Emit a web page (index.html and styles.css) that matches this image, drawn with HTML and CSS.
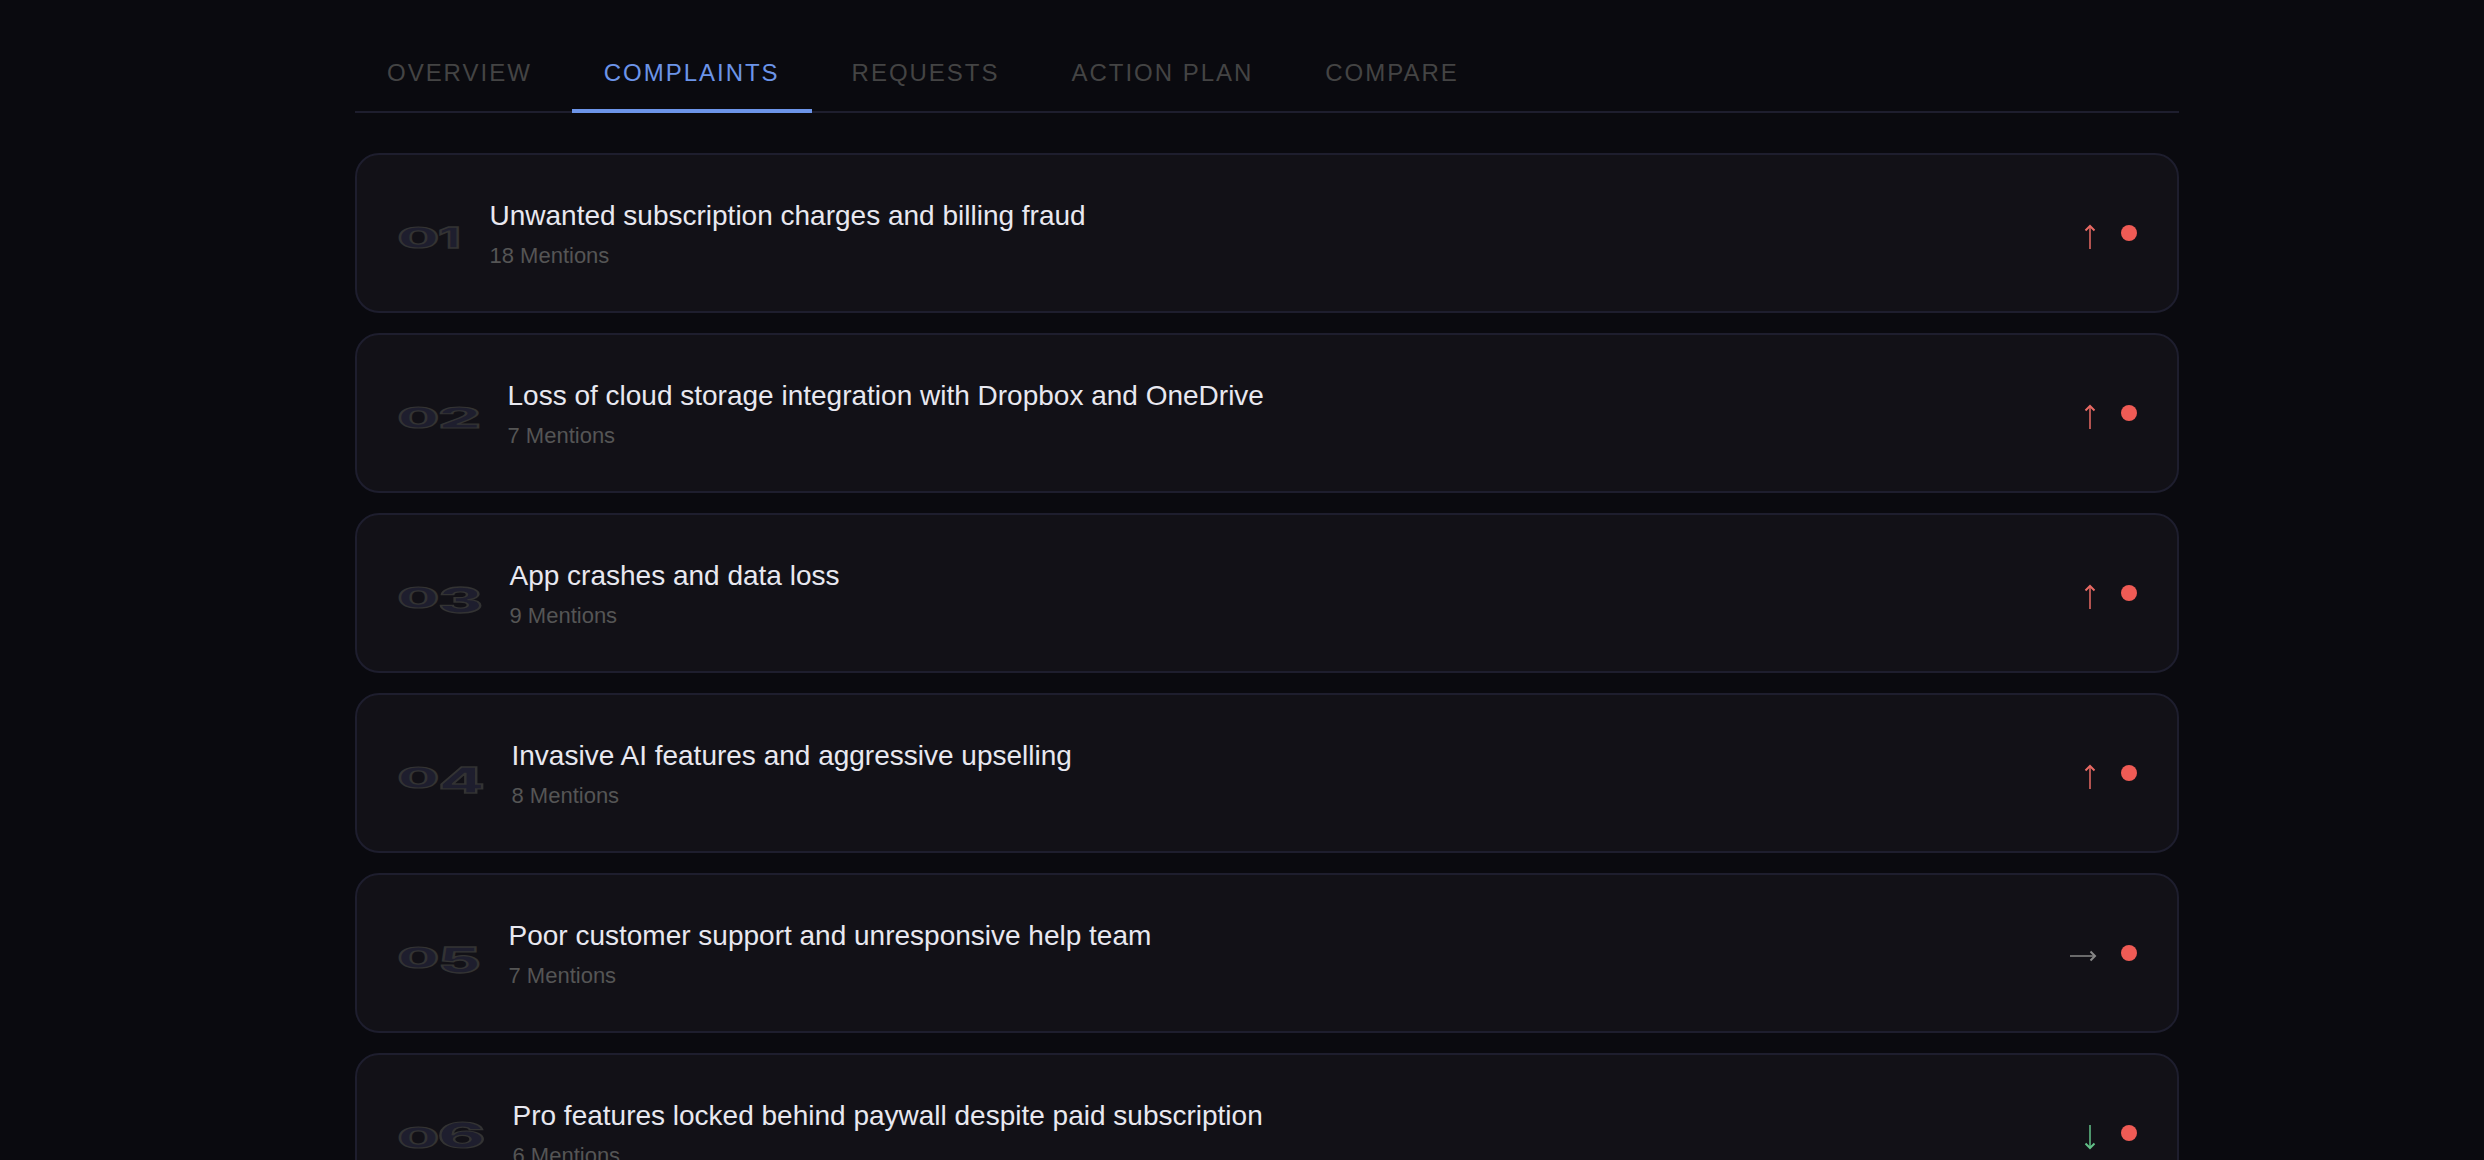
FILE: index.html
```html
<!DOCTYPE html>
<html lang="en">
<head>
<meta charset="UTF-8">
<title>Complaints</title>
<link rel="stylesheet" href="styles.css">
</head>
<body>
<div class="page">
  <nav class="tabs">
    <button class="tab">Overview</button>
    <button class="tab active">Complaints</button>
    <button class="tab">Requests</button>
    <button class="tab">Action Plan</button>
    <button class="tab">Compare</button>
  </nav>

  <div class="list">
    <div class="card">
      <svg class="rank" width="63" height="48">
        <text transform="translate(0.5 38.5) scale(2.15 1)">0</text>
        <text transform="translate(41.2 38.5) scale(1.8 1)">1</text>
      </svg>
      <div class="info">
        <div class="title">Unwanted subscription charges and billing fraud</div>
        <div class="mentions">18 Mentions</div>
      </div>
      <svg class="trend up" width="14" height="36"><path class="shaft" d="M7 12V34"/><path d="M2.5 15.5L7 11L11.5 15.5"/></svg>
      <span class="dot"></span>
    </div>

    <div class="card">
      <svg class="rank" width="81" height="48">
        <text transform="translate(0.5 38.5) scale(2.15 1)">0</text>
        <text transform="translate(41 38.5) scale(2.42 1)">2</text>
      </svg>
      <div class="info">
        <div class="title">Loss of cloud storage integration with Dropbox and OneDrive</div>
        <div class="mentions">7 Mentions</div>
      </div>
      <svg class="trend up" width="14" height="36"><path class="shaft" d="M7 12V34"/><path d="M2.5 15.5L7 11L11.5 15.5"/></svg>
      <span class="dot"></span>
    </div>

    <div class="card">
      <svg class="rank" width="83" height="48">
        <text transform="translate(0.5 38.5) scale(2.15 1)">0</text>
        <text transform="translate(41 44) scale(2.45 1.26)">3</text>
      </svg>
      <div class="info">
        <div class="title">App crashes and data loss</div>
        <div class="mentions">9 Mentions</div>
      </div>
      <svg class="trend up" width="14" height="36"><path class="shaft" d="M7 12V34"/><path d="M2.5 15.5L7 11L11.5 15.5"/></svg>
      <span class="dot"></span>
    </div>

    <div class="card">
      <svg class="rank" width="85" height="48">
        <text transform="translate(0.5 38.5) scale(2.15 1)">0</text>
        <text transform="translate(41.5 44) scale(2.4 1.26)">4</text>
      </svg>
      <div class="info">
        <div class="title">Invasive AI features and aggressive upselling</div>
        <div class="mentions">8 Mentions</div>
      </div>
      <svg class="trend up" width="14" height="36"><path class="shaft" d="M7 12V34"/><path d="M2.5 15.5L7 11L11.5 15.5"/></svg>
      <span class="dot"></span>
    </div>

    <div class="card">
      <svg class="rank" width="82" height="48">
        <text transform="translate(0.5 38.5) scale(2.15 1)">0</text>
        <text transform="translate(41.2 44) scale(2.33 1.26)">5</text>
      </svg>
      <div class="info">
        <div class="title">Poor customer support and unresponsive help team</div>
        <div class="mentions">7 Mentions</div>
      </div>
      <svg class="trend flat" width="28" height="36"><path class="shaft" d="M1 21H25"/><path d="M21.5 16.5L26 21L21.5 25.5"/></svg>
      <span class="dot"></span>
    </div>

    <div class="card">
      <svg class="rank" width="86" height="48">
        <text transform="translate(0.5 38.5) scale(2.15 1)">0</text>
        <text transform="translate(40.5 38.5) scale(2.6 1.26)">6</text>
      </svg>
      <div class="info">
        <div class="title">Pro features locked behind paywall despite paid subscription</div>
        <div class="mentions">6 Mentions</div>
      </div>
      <svg class="trend down" width="14" height="36"><path class="shaft" d="M7 10V32"/><path d="M2.5 28.5L7 33L11.5 28.5"/></svg>
      <span class="dot"></span>
    </div>
  </div>
</div>
</body>
</html>
```
FILE: styles.css
```css
* {
  box-sizing: border-box;
}

body {
  margin: 0;
  height: 1160px;
  overflow: hidden;
  background: #0a0a0f;
  color: #e8e8f0;
  font-family: "Liberation Sans", Arial, sans-serif;
}

.page {
  width: 1824px;
  margin-left: 355px;
  padding-top: 33px;
}

.tabs {
  display: flex;
  gap: 8px;
  height: 80px;
  border-bottom: 2px solid #1e1e2e;
  margin-bottom: 40px;
}

.tab {
  height: 80px;
  padding: 3px 32px 0;
  background: none;
  border: none;
  border-bottom: 4px solid transparent;
  color: #444;
  font-family: inherit;
  font-size: 24px;
  letter-spacing: 1.98px;
  text-transform: uppercase;
}

.tab.active {
  color: #6c94e8;
  border-bottom-color: #6c94e8;
}

.list {
  display: flex;
  flex-direction: column;
  gap: 20px;
}

.card {
  display: flex;
  align-items: center;
  height: 160px;
  padding: 0 40px;
  background: #121117;
  border: 2px solid #1e1e2e;
  border-radius: 24px;
}

.rank {
  flex: none;
  margin-right: 29.5px;
  overflow: visible;
}

.rank text {
  font-family: Inter, sans-serif;
  font-size: 28px;
  font-weight: 800;
  fill: #1e1e2e;
  stroke: #333;
  stroke-width: 2px;
  vector-effect: non-scaling-stroke;
}

.info {
  flex: 1;
  padding-top: 2px;
}

.title {
  font-size: 28px;
  line-height: 32px;
  margin-bottom: 11px;
}

.mentions {
  color: #555;
  font-size: 22px;
  line-height: 26px;
}

.trend {
  flex: none;
  margin-right: 24px;
  fill: none;
  stroke: currentColor;
  stroke-width: 2px;
}

.trend .shaft {
  stroke-opacity: 0.75;
}

.up {
  color: #ea6a64;
}

.flat {
  color: #888;
}

.down {
  color: #62c088;
}

.dot {
  width: 16px;
  height: 16px;
  border-radius: 50%;
  background: #ef5b55;
}
```
